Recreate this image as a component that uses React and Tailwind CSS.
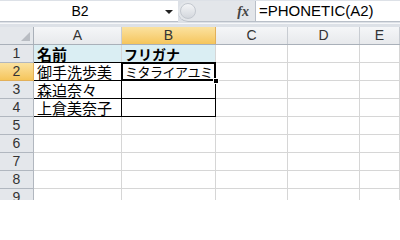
import React from "react";

const cols = [
  { key: "A", w: "w-[88px]" },
  { key: "B", w: "w-[94px]" },
  { key: "C", w: "w-[72px]" },
  { key: "D", w: "w-[72px]" },
  { key: "E", w: "flex-1" },
];

const jp = { fontFamily: '"Noto Sans CJK JP", "Noto Sans", sans-serif' };

const FormulaBar = () => (
  <div className="h-[27px] shrink-0 bg-[#dde1e7] flex flex-col">
    <div className="flex h-[22px] pt-[1px]">
      <div className="w-[178px] bg-white border-b border-[#b9bfc8] flex items-center relative">
        <span className="w-[160px] text-center text-[14px] text-black">B2</span>
        <span className="absolute left-[165px] top-[9px] w-0 h-0 border-l-[4px] border-r-[4px] border-t-[4px] border-l-transparent border-r-transparent border-t-[#222]" />
      </div>
      <div className="w-[77px] bg-[#e3e6ea] border-b border-[#b9bfc8] rounded-l-[10px] flex items-center relative">
        <div className="absolute left-[2px] top-[2px] w-[16px] h-[16px] rounded-full bg-gradient-to-b from-[#f4f5f7] to-[#d3d7dd] border border-[#c3c8cf]" />
        <span className="ml-auto mr-[6px] italic font-bold text-[14px] text-[#444]" style={{ fontFamily: '"Liberation Serif", serif' }}>
          fx
        </span>
      </div>
      <div className="flex-1 bg-white border-l border-b border-[#b9bfc8] flex items-center pl-[3px]">
        <span className="text-[15px] text-black">=PHONETIC(A2)</span>
      </div>
    </div>
    <div className="h-[1px] bg-[#f6f7f9] mt-[1px]" />
  </div>
);

const ColumnHeader = () => (
  <div className="flex h-[18px] shrink-0 border-b border-[#a9b0b9]">
    <div className="w-[34px] bg-[#e4e7eb] border-r border-[#a9b0b9] relative">
      <svg className="absolute right-[3px] bottom-[3px]" width="9" height="9" viewBox="0 0 9 9">
        <polygon points="9,0 9,9 0,9" fill="#b8bcc2" />
      </svg>
    </div>
    {cols.map((c) => (
      <div
        key={c.key}
        className={`${c.w} ${
          c.key === "B"
            ? "bg-gradient-to-b from-[#fbe29f] to-[#f5c55a] border-[#e2b05a]"
            : "bg-gradient-to-b from-[#f5f6f8] to-[#e7e9ec] border-[#c8ccd2]"
        } border-r flex items-center justify-center text-[14px] text-[#333]`}
      >
        {c.key}
      </div>
    ))}
  </div>
);

const rows = [
  { n: 1, a: "名前", b: "フリガナ", head: true },
  { n: 2, a: "御手洗歩美", b: "ミタライアユミ" },
  { n: 3, a: "森迫奈々", b: "" },
  { n: 4, a: "上倉美奈子", b: "" },
  { n: 5 },
  { n: 6 },
  { n: 7 },
  { n: 8 },
  { n: 9 },
];

const Row = ({ r }) => {
  const inTable = r.n >= 2 && r.n <= 4;
  const active = r.n === 2;
  return (
    <div className="flex h-[18px] shrink-0">
      <div
        className={`w-[34px] border-r border-b flex items-center justify-center text-[14px] text-[#333] ${
          active
            ? "bg-gradient-to-b from-[#fbe29f] to-[#f5c55a] border-[#e2b05a]"
            : "bg-[#e4e7eb] border-[#b1b7bf]"
        }`}
      >
        {r.n}
      </div>
      {cols.map((c) => {
        const tableCol = c.key === "A" || c.key === "B";
        let cls = "border-r border-b border-[#d6d6d6]";
        if (r.head && tableCol) cls = "bg-[#daeef3] border-r border-b border-[#d6d6d6] border-b-black";
        if (inTable && tableCol) cls = "border-r border-b border-black";
        return (
          <div key={c.key} className={`${c.w} ${cls} relative flex items-center`}>
            {c.key === "A" && r.a && (
              <span className={`pl-[3px] text-[15px] leading-none whitespace-nowrap text-black ${r.head ? "font-bold" : ""}`} style={jp}>
                {r.a}
              </span>
            )}
            {c.key === "B" && r.b && !active && (
              <span className="pl-[2px] text-[14px] leading-none whitespace-nowrap text-black font-bold" style={jp}>
                {r.b}
              </span>
            )}
            {c.key === "B" && active && (
              <>
                <div className="absolute left-[-1px] top-[-1px] right-[-1px] bottom-[-1px] border-2 border-black z-10" />
                <span className="pl-[3px] text-[13px] leading-none whitespace-nowrap text-black tracking-[-0.5px]" style={jp}>
                  {r.b}
                </span>
                <div className="absolute right-[-4px] bottom-[-4px] w-[6px] h-[6px] bg-black border border-white z-20" />
              </>
            )}
          </div>
        );
      })}
    </div>
  );
};

export default function App() {
  return (
    <div className="w-[400px] h-[200px] overflow-hidden bg-white flex flex-col" style={{ fontFamily: '"Liberation Sans", Arial, sans-serif' }}>
      <FormulaBar />
      <ColumnHeader />
      {rows.map((r) => (
        <Row key={r.n} r={r} />
      ))}
    </div>
  );
}
